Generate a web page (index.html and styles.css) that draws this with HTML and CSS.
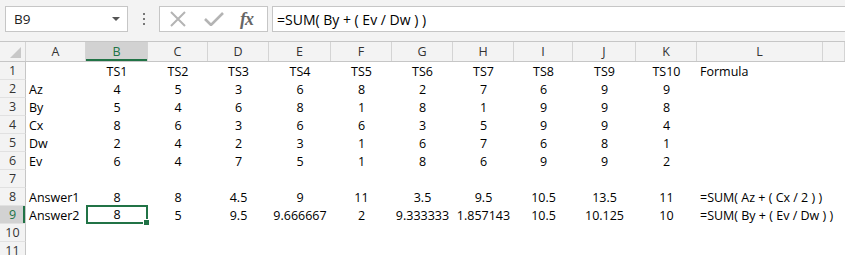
FILE: index.html
```
<!DOCTYPE html>
<html lang="en">
<head>
    <meta charset="UTF-8">
    <title>Sheet1</title>
    <link rel="stylesheet" href="styles.css">
</head>
<body>
    <div class="formula-bar">
        <div class="name-box">
            <span>B9</span>
            <span class="caret"></span>
        </div>
        <div class="grip"><i></i><i></i><i></i></div>
        <div class="fx-box">
            <svg class="icon" width="18" height="16" viewBox="0 0 18 16">
                <path d="M2 1 L16 15 M16 1 L2 15" stroke="#b4b4b4" stroke-width="2" fill="none"/>
            </svg>
            <svg class="icon" width="20" height="14" viewBox="0 0 20 14">
                <path d="M1 7 L7 13 L19 1" stroke="#b4b4b4" stroke-width="2.6" fill="none"/>
            </svg>
            <span class="fx">fx</span>
        </div>
        <div class="formula-input">=SUM( By + ( Ev / Dw ) )</div>
    </div>

    <div class="sheet">
        <div class="row head">
            <div class="corner"><span class="tri"></span></div>
            <div class="ch">A</div>
            <div class="ch sel">B</div>
            <div class="ch">C</div>
            <div class="ch">D</div>
            <div class="ch">E</div>
            <div class="ch">F</div>
            <div class="ch">G</div>
            <div class="ch">H</div>
            <div class="ch">I</div>
            <div class="ch">J</div>
            <div class="ch">K</div>
            <div class="ch">L</div>
            <div class="ch"></div>
        </div>
        <div id="rows"></div>
    </div>

    <script>
        const data = [
            ['', 'TS1', 'TS2', 'TS3', 'TS4', 'TS5', 'TS6', 'TS7', 'TS8', 'TS9', 'TS10', 'Formula'],
            ['Az', 4, 5, 3, 6, 8, 2, 7, 6, 9, 9, ''],
            ['By', 5, 4, 6, 8, 1, 8, 1, 9, 9, 8, ''],
            ['Cx', 8, 6, 3, 6, 6, 3, 5, 9, 9, 4, ''],
            ['Dw', 2, 4, 2, 3, 1, 6, 7, 6, 8, 1, ''],
            ['Ev', 6, 4, 7, 5, 1, 8, 6, 9, 9, 2, ''],
            [],
            ['Answer1', 8, 8, 4.5, 9, 11, 3.5, 9.5, 10.5, 13.5, 11, '=SUM( Az + ( Cx / 2 ) )'],
            ['Answer2', 8, 5, 9.5, '9.666667', 2, '9.333333', '1.857143', 10.5, 10.125, 10, '=SUM( By + ( Ev / Dw ) )'],
            [],
            []
        ];

        const rows = document.getElementById('rows');
        data.forEach((cells, r) => {
            const row = document.createElement('div');
            row.className = 'row';
            let html = `<div class="rh${r === 8 ? ' sel' : ''}">${r + 1}</div>`;
            for (let c = 0; c < 13; c++) {
                const v = cells[c] === undefined ? '' : cells[c];
                let cls = 'cell';
                if (c === 0 || c === 11) cls += ' left';
                if (r === 8 && c === 1) cls += ' active';
                html += `<div class="${cls}"><span>${v}</span></div>`;
            }
            row.innerHTML = html;
            rows.appendChild(row);
        });
    </script>
</body>
</html>
```

FILE: styles.css
```
body {
    margin: 0;
    width: 845px;
    height: 255px;
    overflow: hidden;
    background: #f3f3f3;
    font-family: 'Open Sans', sans-serif;
    font-size: 12.5px;
    color: #000;
}

.formula-bar {
    display: flex;
    align-items: center;
    height: 26px;
    padding: 6px 0 0 5px;
}

.name-box {
    display: flex;
    align-items: center;
    justify-content: space-between;
    box-sizing: border-box;
    width: 123px;
    height: 26px;
    padding: 0 7px 0 8px;
    background: #fff;
    border: 1px solid #c6c6c6;
    font-size: 13.5px;
    color: #222;
}

.caret {
    width: 0;
    height: 0;
    border-left: 4px solid transparent;
    border-right: 4px solid transparent;
    border-top: 4px solid #555;
}

.grip {
    display: flex;
    flex-direction: column;
    align-items: center;
    justify-content: center;
    gap: 3px;
    width: 31px;
}

.grip i {
    width: 2px;
    height: 2px;
    background: #777;
}

.fx-box {
    display: flex;
    align-items: center;
    box-sizing: border-box;
    width: 109px;
    height: 26px;
    padding-left: 9px;
    background: #fff;
    border: 1px solid #c6c6c6;
}

.icon {
    margin-right: 17px;
}

.icon + .icon {
    margin-right: 16px;
}

.fx {
    font-family: 'Liberation Serif', serif;
    font-style: italic;
    font-weight: bold;
    font-size: 18px;
    color: #666;
    letter-spacing: -1px;
}

.formula-input {
    flex: 1;
    box-sizing: border-box;
    height: 26px;
    margin-left: 4px;
    padding: 3px 0 0 4px;
    background: #fff;
    border: 1px solid #c6c6c6;
    border-right: none;
    font-size: 14px;
    white-space: nowrap;
}

.sheet {
    margin-top: 9px;
    background: #fff;
    border-top: 1px solid #c6c6c6;
}

.row {
    display: grid;
    grid-template-columns: 26px 60px 62px 60px 61px 62px 61px 61px 61px 59px 63px 61px 126px 1fr;
    height: 18px;
}

.row.head {
    height: 19px;
    background: #f3f3f3;
    border-bottom: 1px solid #c6c6c6;
}

.corner {
    position: relative;
    border-right: 1px solid #d4d4d4;
}

.tri {
    position: absolute;
    right: 4px;
    bottom: 3px;
    width: 0;
    height: 0;
    border-left: 11px solid transparent;
    border-bottom: 11px solid #c8c8c8;
}

.ch {
    display: flex;
    align-items: center;
    justify-content: center;
    border-right: 1px solid #d4d4d4;
    color: #333;
    font-size: 12.5px;
}

.ch.sel {
    background: #d2d2d2;
    color: #217346;
    box-shadow: inset 0 -2px 0 #217346;
}

.rh {
    display: flex;
    align-items: center;
    justify-content: center;
    background: #f3f3f3;
    border-right: 1px solid #c6c6c6;
    border-bottom: 1px solid #e1e1e1;
    box-sizing: border-box;
    color: #333;
    font-size: 12.5px;
}

.rh.sel {
    background: #d2d2d2;
    color: #217346;
    box-shadow: inset -2px 0 0 #217346;
}

.cell {
    display: flex;
    align-items: center;
    justify-content: center;
    white-space: nowrap;
    min-width: 0;
}

.cell.left {
    justify-content: flex-start;
    padding-left: 3px;
}

.cell.active {
    position: relative;
    margin-top: -1px;
    height: 19px;
    box-sizing: border-box;
    border: 2px solid #217346;
}

.cell.active::after {
    content: '';
    position: absolute;
    right: -4px;
    bottom: -4px;
    width: 5px;
    height: 5px;
    background: #217346;
    border: 1px solid #fff;
}
```
